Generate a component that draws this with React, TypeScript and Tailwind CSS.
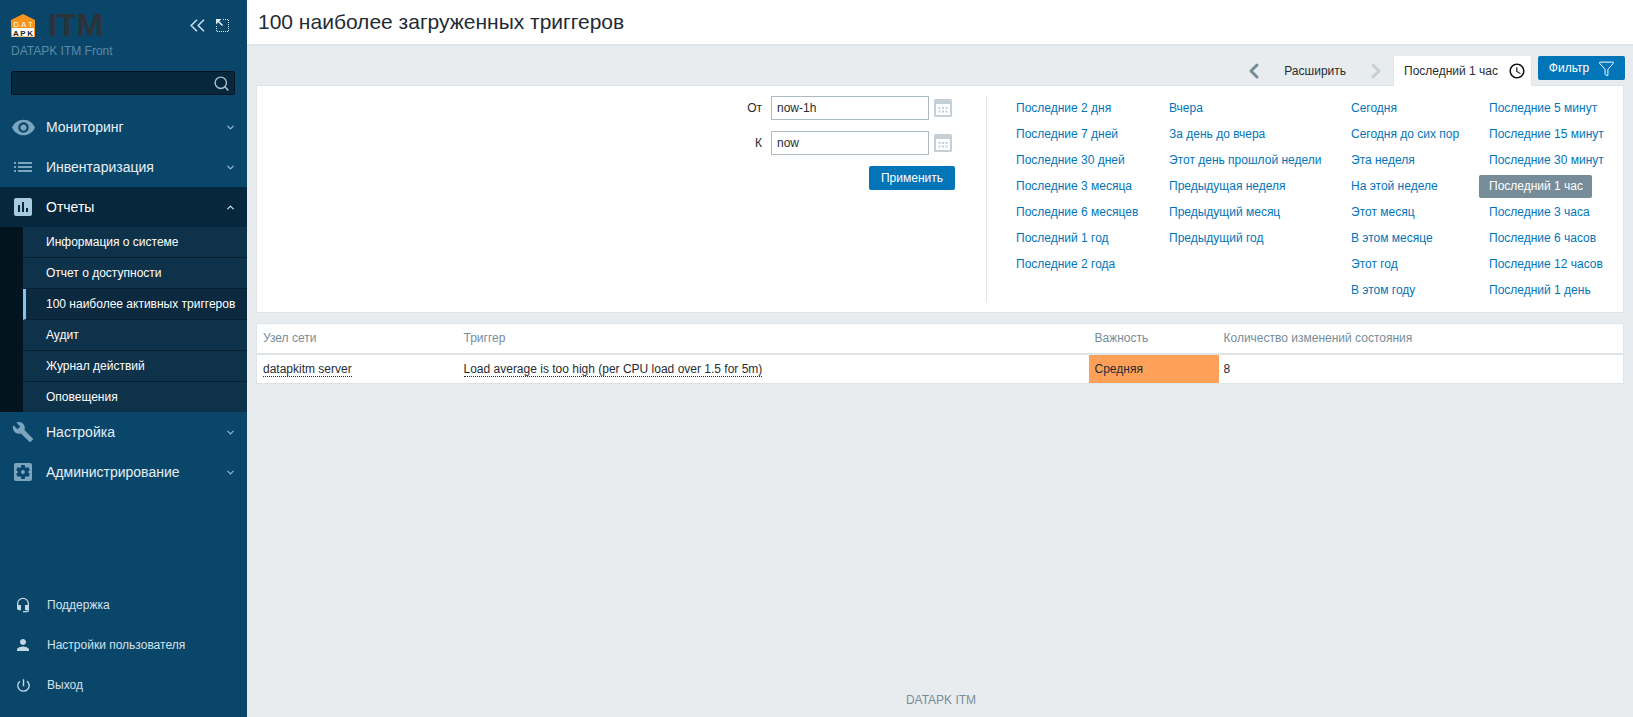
import React from 'react';
import { ChevronDown, ChevronUp, ChevronLeft, ChevronRight, Search, Funnel } from 'lucide-react';
import {
  MdRemoveRedEye,
  MdList,
  MdAssessment,
  MdBuild,
  MdSettingsApplications,
  MdHeadsetMic,
  MdPerson,
  MdPowerSettingsNew,
  MdAccessTime,
} from 'react-icons/md';

const timeColumns = [
  { width: 'w-[153px]', items: ['Последние 2 дня', 'Последние 7 дней', 'Последние 30 дней', 'Последние 3 месяца', 'Последние 6 месяцев', 'Последний 1 год', 'Последние 2 года'] },
  { width: 'w-[182px]', items: ['Вчера', 'За день до вчера', 'Этот день прошлой недели', 'Предыдущая неделя', 'Предыдущий месяц', 'Предыдущий год'] },
  { width: 'w-[138px]', items: ['Сегодня', 'Сегодня до сих пор', 'Эта неделя', 'На этой неделе', 'Этот месяц', 'В этом месяце', 'Этот год', 'В этом году'] },
  { width: 'w-[130px]', items: ['Последние 5 минут', 'Последние 15 минут', 'Последние 30 минут', 'Последний 1 час', 'Последние 3 часа', 'Последние 6 часов', 'Последние 12 часов', 'Последний 1 день'] },
];

const subItems = ['Информация о системе', 'Отчет о доступности', '100 наиболее активных триггеров', 'Аудит', 'Журнал действий', 'Оповещения'];

const Logo = () => (
  <svg width="24" height="23" viewBox="0 0 24 23" className="shrink-0">
    <path d="M0 6 L12 0 L24 6 V23 H0 Z" fill="#f7941d" />
    <rect x="1" y="14" width="22" height="8.5" fill="#fff" />
    <text x="12" y="12.5" textAnchor="middle" fontSize="7.5" textLength="19" fill="#fff" fontFamily="Liberation Sans, sans-serif">DAT</text>
    <text x="12" y="21.5" textAnchor="middle" fontSize="8" fontWeight="700" textLength="20" fill="#222" fontFamily="Liberation Sans, sans-serif">APK</text>
  </svg>
);

const CalendarIcon = () => (
  <svg width="18" height="18" viewBox="0 0 18 18" className="shrink-0">
    <rect x="0" y="0" width="18" height="18" rx="1.5" fill="#c5d0d6" />
    <rect x="2" y="5" width="14" height="11" fill="#fff" />
    {[4.5, 8, 11.5].map(x => [8, 11.5].map(y => <rect key={`${x}-${y}`} x={x} y={y} width="2" height="2" fill="#c5d0d6" />))}
  </svg>
);

const DoubleLeftIcon = () => (
  <svg width="15" height="13" viewBox="0 0 15 13" fill="none" stroke="#c5dbe8" strokeWidth="1.6">
    <path d="M7 0.7 L1.2 6.5 L7 12.3" />
    <path d="M14 0.7 L8.2 6.5 L14 12.3" />
  </svg>
);

const CollapseIcon = () => (
  <svg width="13" height="13" viewBox="0 0 13 13" fill="none">
    <path d="M7 0.5 H12.5 V12.5 H0.5 V7" stroke="#dbe9f2" strokeWidth="1" strokeDasharray="1 1" />
    <path d="M0 0 H5.5 L0 5.5 Z" fill="#dbe9f2" />
    <path d="M2 2 L6.5 6.5" stroke="#dbe9f2" strokeWidth="1.6" />
  </svg>
);

const MenuItem = ({ icon, label, open }: { icon: React.ReactNode; label: string; open?: boolean }) => (
  <div className={`flex h-10 items-center ${open ? 'bg-[#07283c] text-white' : 'text-[#e6f0f6]'}`}>
    <div className={`flex w-[46px] shrink-0 justify-center ${open ? 'text-[#a9cbe0]' : 'text-[#7ba4bf]'}`}>{icon}</div>
    <span className="flex-1 text-[14px]">{label}</span>
    {open
      ? <ChevronUp size={11} strokeWidth={2.5} className="mr-[11px] text-[#dbe9f2]" />
      : <ChevronDown size={11} strokeWidth={2.5} className="mr-[11px] text-[#9dbdd2]" />}
  </div>
);

const BottomItem = ({ icon, label }: { icon: React.ReactNode; label: string }) => (
  <div className="flex h-10 items-center text-[#d3e2ec]">
    <div className="flex w-[47px] shrink-0 justify-center pr-[1px] text-[#c3d7e4]">{icon}</div>
    <span className="text-[12px]">{label}</span>
  </div>
);

export default function App() {
  return (
    <div className="flex h-[717px] w-[1633px] overflow-hidden bg-[#e8ecef] text-[12px] text-[#1f2c33]" style={{ fontFamily: '"Liberation Sans", Arial, sans-serif' }}>
      <aside className="flex w-[247px] shrink-0 flex-col bg-[#0a466a]">
        <div className="h-[107px] shrink-0 px-[11px] pt-[12px]">
          <div className="flex h-[26px] items-center">
            <Logo />
            <span className="ml-[13px] text-[32px] font-bold leading-[26px] text-[#2c3338]">ITM</span>
            <div className="ml-auto mr-[7px] flex items-center gap-[11px]">
              <DoubleLeftIcon />
              <CollapseIcon />
            </div>
          </div>
          <div className="mt-[4px] text-[12px] text-[#5e8aa6]">DATAPK ITM Front</div>
          <div className="mt-[11px] flex h-6 w-[224px] items-center justify-end rounded-[2px] border border-[#03141e] bg-[#07283c] pr-[4px]">
            <Search size={17} strokeWidth={2} className="text-[#a9c2d2]" />
          </div>
        </div>
        <div>
          <MenuItem icon={<MdRemoveRedEye size={25} />} label="Мониторинг" />
          <MenuItem icon={<MdList size={24} />} label="Инвентаризация" />
          <MenuItem icon={<MdAssessment size={24} />} label="Отчеты" open />
          <div className="flex bg-[#03141e]">
            <div className="w-[23px] shrink-0" />
            <div className="flex-1">
              {subItems.map(item => (
                <div
                  key={item}
                  className={`flex h-[31px] items-center border-b border-[#07202f] bg-[#0f324b] pl-[23px] text-[12px] text-white last:h-[30px] last:border-b-0 ${item.startsWith('100') ? 'border-l-[3px] !bg-[#0b2a40] !pl-[20px] border-l-[#7fc4f2]' : ''}`}
                >
                  {item}
                </div>
              ))}
            </div>
          </div>
          <MenuItem icon={<MdBuild size={22} />} label="Настройка" />
          <MenuItem icon={<MdSettingsApplications size={24} />} label="Администрирование" />
        </div>
        <div className="mt-auto pb-[12px]">
          <BottomItem icon={<MdHeadsetMic size={16} />} label="Поддержка" />
          <BottomItem icon={<MdPerson size={18} />} label="Настройки пользователя" />
          <BottomItem icon={<MdPowerSettingsNew size={17} />} label="Выход" />
        </div>
      </aside>

      <main className="flex min-w-0 flex-1 flex-col">
        <header className="flex h-[46px] shrink-0 items-center border-b-2 border-[#dfe4e7] bg-white pl-[11px]">
          <h1 className="text-[21px] text-[#1f2c33]">100 наиболее загруженных триггеров</h1>
        </header>

        <div className="flex flex-1 flex-col px-[9px]">
          <div className="flex h-[39px] items-end justify-end">
            <div className="flex h-[29px] items-center">
              <ChevronLeft size={24} strokeWidth={3} className="text-[#768d99]" />
              <span className="ml-[18px] mr-[18px] text-[#1f2c33]">Расширить</span>
              <ChevronRight size={24} strokeWidth={3} className="text-[#c5d0d6]" />
            </div>
            <div className="relative z-10 -mb-px ml-[5px] flex h-[30px] w-[139px] items-center gap-[10px] rounded-t-[2px] border-x border-[#dfe4e7] bg-white pl-[10px]">
              <span>Последний 1 час</span>
              <MdAccessTime size={18} className="text-[#111]" />
            </div>
            <div className="-mr-px mb-[5px] ml-[6px] flex h-6 w-[87px] items-center justify-center gap-[9px] rounded-[2px] bg-[#0275b8] pl-[1px] text-white">
              <span>Фильтр</span>
              <Funnel size={17} strokeWidth={1.4} />
            </div>
          </div>

          <section className="flex h-[228px] shrink-0 border border-[#dfe4e7] bg-white py-[10px]">
            <div className="flex w-[695px] shrink-0 flex-col items-end">
              <div className="flex items-center">
                <span className="mr-[9px] text-[#1f2c33]">От</span>
                <input readOnly value="now-1h" className="h-6 w-[158px] border border-[#acbbc3] px-[5px] text-[12px] outline-none" />
                <span className="ml-[5px]"><CalendarIcon /></span>
              </div>
              <div className="mt-[11px] flex items-center">
                <span className="mr-[9px] text-[#1f2c33]">К</span>
                <input readOnly value="now" className="h-6 w-[158px] border border-[#acbbc3] px-[5px] text-[12px] outline-none" />
                <span className="ml-[5px]"><CalendarIcon /></span>
              </div>
              <button className="mr-[-3px] mt-[11px] h-6 w-[86px] rounded-[2px] bg-[#0275b8] text-white">Применить</button>
            </div>
            <div className="ml-[34px] flex flex-1 border-l border-[#dfe4e7] pl-[29px]">
              <div className="-mt-px flex">
                {timeColumns.map(col => (
                  <div key={col.items[0]} className={`${col.width} shrink-0`}>
                    {col.items.map(t => (
                      <div key={t} className="flex h-[26px] items-center">
                        <span className={t === 'Последний 1 час' ? 'ml-[-10px] flex h-[23px] w-[113px] items-center rounded-[2px] bg-[#768d99] pl-[10px] text-white' : 'whitespace-nowrap text-[#0275b8]'}>{t}</span>
                      </div>
                    ))}
                  </div>
                ))}
              </div>
            </div>
          </section>

          <table className="mt-[10px] w-full table-fixed border border-[#dfe4e7] bg-white">
            <thead>
              <tr className="h-[30px] border-b-2 border-[#dfe4e7] text-left text-[#768d99]">
                <th className="w-[201px] pl-[6px] font-normal">Узел сети</th>
                <th className="w-[631px] pl-[6px] font-normal">Триггер</th>
                <th className="w-[130px] pl-[6px] font-normal">Важность</th>
                <th className="pl-[5px] font-normal">Количество изменений состояния</th>
              </tr>
            </thead>
            <tbody>
              <tr className="h-[30px]">
                <td className="pl-[6px]"><span className="border-b border-dotted border-[#1f2c33]">datapkitm server</span></td>
                <td className="pl-[6px]"><span className="border-b border-dotted border-[#1f2c33]">Load average is too high (per CPU load over 1.5 for 5m)</span></td>
                <td className="bg-[#ffa059] pl-[6px]">Средняя</td>
                <td className="pl-[5px]">8</td>
              </tr>
            </tbody>
          </table>

          <footer className="mt-auto flex h-[35px] items-center justify-center pl-[2px] text-[#768d99]">DATAPK ITM</footer>
        </div>
      </main>
    </div>
  );
}
